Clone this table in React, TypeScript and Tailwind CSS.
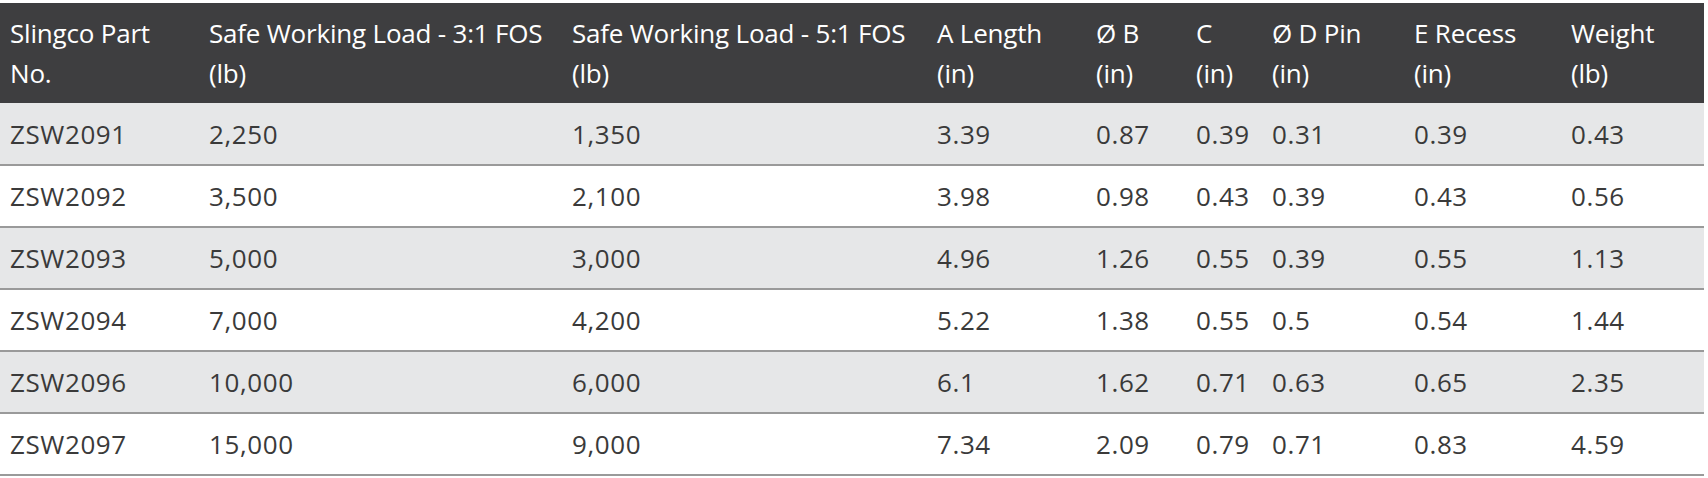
import React from "react";

const headers: [string, string][] = [
  ["Slingco Part", "No."],
  ["Safe Working Load - 3:1 FOS", "(lb)"],
  ["Safe Working Load - 5:1 FOS", "(lb)"],
  ["A Length", "(in)"],
  ["Ø B", "(in)"],
  ["C", "(in)"],
  ["Ø D Pin", "(in)"],
  ["E Recess", "(in)"],
  ["Weight", "(lb)"],
];

const rows: string[][] = [
  ["ZSW2091", "2,250", "1,350", "3.39", "0.87", "0.39", "0.31", "0.39", "0.43"],
  ["ZSW2092", "3,500", "2,100", "3.98", "0.98", "0.43", "0.39", "0.43", "0.56"],
  ["ZSW2093", "5,000", "3,000", "4.96", "1.26", "0.55", "0.39", "0.55", "1.13"],
  ["ZSW2094", "7,000", "4,200", "5.22", "1.38", "0.55", "0.5", "0.54", "1.44"],
  ["ZSW2096", "10,000", "6,000", "6.1", "1.62", "0.71", "0.63", "0.65", "2.35"],
  ["ZSW2097", "15,000", "9,000", "7.34", "2.09", "0.79", "0.71", "0.83", "4.59"],
];

export default function App() {
  return (
    <div className="bg-white w-[1708px] h-[478px] pt-[3px] font-['Open_Sans',sans-serif]">
      <table className="table-fixed border-collapse w-[1704px] text-[26px]">
        <colgroup>
          <col className="w-[199px]" />
          <col className="w-[363px]" />
          <col className="w-[365px]" />
          <col className="w-[159px]" />
          <col className="w-[100px]" />
          <col className="w-[76px]" />
          <col className="w-[142px]" />
          <col className="w-[157px]" />
          <col className="w-[143px]" />
        </colgroup>
        <thead>
          <tr className="bg-[#3e3e40] text-white">
            {headers.map(([a, b]) => (
              <th key={a} className="h-[100px] px-[10px] text-left align-middle font-normal leading-[40px] tracking-[-0.2px] whitespace-nowrap">
                <div>{a}</div>
                <div>{b}</div>
              </th>
            ))}
          </tr>
        </thead>
        <tbody className="text-[#3a3a3a]">
          {rows.map((r, i) => (
            <tr key={r[0]} className={`border-b-2 border-[#9a9a9a] ${i % 2 === 0 ? "bg-[#e6e7e8]" : "bg-white"}`}>
              {r.map((c, j) => (
                <td key={j} className="h-[62px] px-[10px] leading-[40px] tracking-[0.6px] whitespace-nowrap">
                  {c}
                </td>
              ))}
            </tr>
          ))}
        </tbody>
      </table>
    </div>
  );
}
